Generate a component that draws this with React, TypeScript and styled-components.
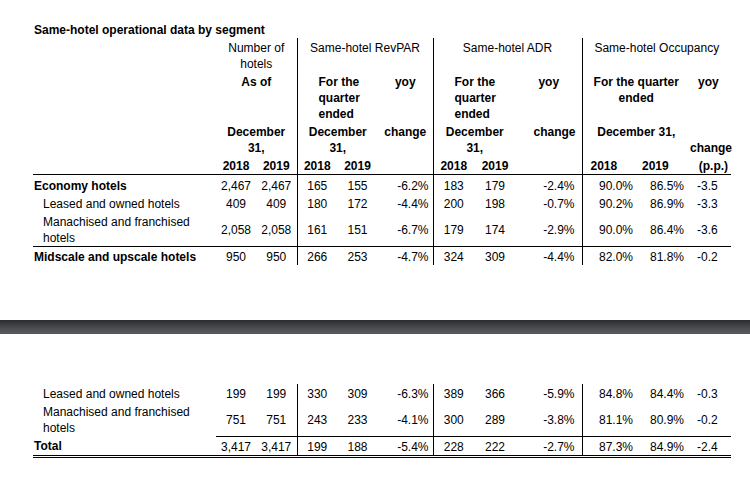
import React from 'react';
import styled, { createGlobalStyle } from 'styled-components';

const GlobalStyle = createGlobalStyle`
  html, body { margin: 0; padding: 0; background: #ffffff; }
  body { font-family: "Liberation Sans", Arial, sans-serif; color: #000; }
`;

type Align = 'left' | 'center' | 'right';

const Page = styled.div`
  width: 750px;
  height: 491px;
  overflow: hidden;
  background: #fff;
  display: flex;
  flex-direction: column;
`;

const TopSection = styled.section`
  padding: 23px 0 0 33px;
`;

const BottomSection = styled.section`
  padding: 50px 0 0 33px;
`;

const Title = styled.h1`
  margin: 0;
  padding-left: 1px;
  font-size: 12px;
  font-weight: 700;
  line-height: 15px;
`;

const DataTable = styled.table`
  border-collapse: collapse;
  table-layout: fixed;
  width: 698px;
  font-size: 12px;
  line-height: 16px;
`;

const Divider = styled.div`
  margin-top: 55px;
  height: 14px;
  background: linear-gradient(to bottom, #2a2c2e 0%, #3b3e41 30%, #4f5255 70%, #57595c 100%);
`;

interface CellProps {
  $align?: Align;
  $pl?: number;
  $pr?: number;
  $bold?: boolean;
  $rule?: boolean;
  $under?: boolean;
}

const HeadCell = styled.th<CellProps>`
  padding: 2px ${(p) => p.$pr ?? 0}px 0 ${(p) => p.$pl ?? 0}px;
  text-align: ${(p) => p.$align ?? 'center'};
  font-weight: ${(p) => (p.$bold ? 700 : 400)};
  vertical-align: top;
  white-space: nowrap;
  border-left: ${(p) => (p.$rule ? '1px solid #000' : 'none')};
  border-bottom: ${(p) => (p.$under ? '1px solid #000' : 'none')};
`;

interface BodyCellProps {
  $align?: Align;
  $pl?: number;
  $pr?: number;
  $rule?: boolean;
  $lineTop?: boolean;
  $doubleBottom?: boolean;
  $lead?: boolean;
}

const NumCell = styled.td<BodyCellProps>`
  padding: ${(p) => (p.$lead ? 3 : 2)}px ${(p) => p.$pr ?? 0}px 0 ${(p) => p.$pl ?? 0}px;
  text-align: ${(p) => p.$align ?? 'center'};
  vertical-align: middle;
  white-space: nowrap;
  border-left: ${(p) => (p.$rule ? '1px solid #000' : 'none')};
  border-top: ${(p) => (p.$lineTop ? '1px solid #000' : 'none')};
  border-bottom: ${(p) => (p.$doubleBottom ? '3px double #000' : 'none')};
`;

const LabelCell = styled.td<{ $bold?: boolean; $indent?: boolean; $lineTop?: boolean; $doubleBottom?: boolean; $lead?: boolean }>`
  padding: ${(p) => (p.$lead ? 3 : 2)}px 0 0 ${(p) => (p.$indent ? 10 : 1)}px;
  text-align: left;
  vertical-align: middle;
  font-weight: ${(p) => (p.$bold ? 700 : 400)};
  border-top: ${(p) => (p.$lineTop ? '1px solid #000' : 'none')};
  border-bottom: ${(p) => (p.$doubleBottom ? '3px double #000' : 'none')};
`;

const colWidths = [183, 40, 41, 40, 41, 55, 41, 42, 66, 56, 52, 41];

const Columns = () => (
  <colgroup>
    {colWidths.map((w, i) => (
      <col key={i} style={{ width: w }} />
    ))}
  </colgroup>
);

interface NumSpec {
  align: Align;
  pl?: number;
  pr?: number;
  rule?: boolean;
}

const numSpec: NumSpec[] = [
  { align: 'center' },
  { align: 'center' },
  { align: 'center', rule: true },
  { align: 'center' },
  { align: 'right', pr: 4 },
  { align: 'center', rule: true },
  { align: 'center' },
  { align: 'right', pr: 7 },
  { align: 'right', pr: 5, rule: true },
  { align: 'right', pr: 6 },
  { align: 'left', pl: 7 },
];

interface RowData {
  label: string[];
  bold?: boolean;
  indent?: boolean;
  values: string[];
  fullRule?: boolean;
  total?: boolean;
  lead?: boolean;
}

const topRows: RowData[] = [
  { label: ['Economy hotels'], bold: true, lead: true, values: ['2,467', '2,467', '165', '155', '-6.2%', '183', '179', '-2.4%', '90.0%', '86.5%', '-3.5'] },
  { label: ['Leased and owned hotels'], indent: true, values: ['409', '409', '180', '172', '-4.4%', '200', '198', '-0.7%', '90.2%', '86.9%', '-3.3'] },
  { label: ['Manachised and franchised', 'hotels'], indent: true, values: ['2,058', '2,058', '161', '151', '-6.7%', '179', '174', '-2.9%', '90.0%', '86.4%', '-3.6'] },
  { label: ['Midscale and upscale hotels'], bold: true, fullRule: true, values: ['950', '950', '266', '253', '-4.7%', '324', '309', '-4.4%', '82.0%', '81.8%', '-0.2'] },
];

const bottomRows: RowData[] = [
  { label: ['Leased and owned hotels'], indent: true, values: ['199', '199', '330', '309', '-6.3%', '389', '366', '-5.9%', '84.8%', '84.4%', '-0.3'] },
  { label: ['Manachised and franchised', 'hotels'], indent: true, values: ['751', '751', '243', '233', '-4.1%', '300', '289', '-3.8%', '81.1%', '80.9%', '-0.2'] },
  { label: ['Total'], bold: true, total: true, values: ['3,417', '3,417', '199', '188', '-5.4%', '228', '222', '-2.7%', '87.3%', '84.9%', '-2.4'] },
];

const BodyRow = ({ row }: { row: RowData }) => (
  <tr>
    <LabelCell
      $bold={row.bold}
      $indent={row.indent}
      $lineTop={row.fullRule}
      $doubleBottom={row.total}
      $lead={row.lead}
    >
      {row.label.map((l, i) => (
        <React.Fragment key={i}>
          {i > 0 && <br />}
          {l}
        </React.Fragment>
      ))}
    </LabelCell>
    {row.values.map((v, i) => {
      const s = numSpec[i];
      return (
        <NumCell
          key={i}
          $align={s.align}
          $pl={s.pl}
          $pr={s.pr}
          $rule={s.rule}
          $lineTop={row.fullRule || row.total}
          $doubleBottom={row.total}
          $lead={row.lead}
        >
          {v}
        </NumCell>
      );
    })}
  </tr>
);

const HeaderRows = () => (
  <thead>
    <tr>
      <HeadCell />
      <HeadCell colSpan={2}>
        Number of
        <br />
        hotels
      </HeadCell>
      <HeadCell colSpan={3} $rule>Same-hotel RevPAR</HeadCell>
      <HeadCell colSpan={3} $rule>Same-hotel ADR</HeadCell>
      <HeadCell colSpan={3} $rule>Same-hotel Occupancy</HeadCell>
    </tr>
    <tr>
      <HeadCell />
      <HeadCell colSpan={2} $bold>As of</HeadCell>
      <HeadCell colSpan={2} $rule $bold $align="left" $pl={21}>
        For the
        <br />
        quarter
        <br />
        ended
      </HeadCell>
      <HeadCell $bold>yoy</HeadCell>
      <HeadCell colSpan={2} $rule $bold $align="left" $pl={21}>
        For the
        <br />
        quarter
        <br />
        ended
      </HeadCell>
      <HeadCell $bold>yoy</HeadCell>
      <HeadCell colSpan={2} $rule $bold>
        For the quarter
        <br />
        ended
      </HeadCell>
      <HeadCell $bold $align="left" $pl={8}>yoy</HeadCell>
    </tr>
    <tr>
      <HeadCell />
      <HeadCell colSpan={2} $bold>
        December
        <br />
        31,
      </HeadCell>
      <HeadCell colSpan={2} $rule $bold>
        December
        <br />
        31,
      </HeadCell>
      <HeadCell $bold>change</HeadCell>
      <HeadCell colSpan={2} $rule $bold>
        December
        <br />
        31,
      </HeadCell>
      <HeadCell $bold $align="right" $pr={6}>change</HeadCell>
      <HeadCell colSpan={2} $rule $bold>December 31,</HeadCell>
      <HeadCell $bold $align="right" $pr={3}>
        <br />
        change
      </HeadCell>
    </tr>
    <tr>
      <HeadCell $under />
      <HeadCell $under $bold>2018</HeadCell>
      <HeadCell $under $bold>2019</HeadCell>
      <HeadCell $under $bold $rule>2018</HeadCell>
      <HeadCell $under $bold>2019</HeadCell>
      <HeadCell $under />
      <HeadCell $under $bold $rule>2018</HeadCell>
      <HeadCell $under $bold>2019</HeadCell>
      <HeadCell $under />
      <HeadCell $under $bold $rule $align="left" $pl={8}>2018</HeadCell>
      <HeadCell $under $bold $align="left" $pl={4}>2019</HeadCell>
      <HeadCell $under $bold $align="right" $pr={3}>(p.p.)</HeadCell>
    </tr>
  </thead>
);

export default function App() {
  return (
    <>
      <GlobalStyle />
      <Page>
        <TopSection>
          <Title>Same-hotel operational data by segment</Title>
          <DataTable>
            <Columns />
            <HeaderRows />
            <tbody>
              {topRows.map((r, i) => (
                <BodyRow key={i} row={r} />
              ))}
            </tbody>
          </DataTable>
        </TopSection>
        <Divider />
        <BottomSection>
          <DataTable>
            <Columns />
            <tbody>
              {bottomRows.map((r, i) => (
                <BodyRow key={i} row={r} />
              ))}
            </tbody>
          </DataTable>
        </BottomSection>
      </Page>
    </>
  );
}
